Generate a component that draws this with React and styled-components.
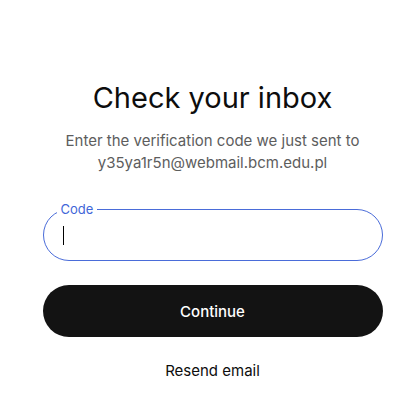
import React from 'react';
import styled, { createGlobalStyle } from 'styled-components';

const GlobalStyle = createGlobalStyle`
  html, body {
    margin: 0;
    padding: 0;
    background: #ffffff;
    font-family: Inter, "Liberation Sans", Arial, sans-serif;
    color: #0d0d0d;
  }
`;

const Page = styled.main`
  display: flex;
  justify-content: center;
  padding: 80px 0 0 6px;
`;

const Card = styled.section`
  width: 340px;
  display: flex;
  flex-direction: column;
  align-items: stretch;
`;

const Title = styled.h1`
  margin: 0;
  text-align: center;
  font-size: 29px;
  font-weight: 400;
  line-height: 36px;
  color: #0d0d0d;
`;

const Subtitle = styled.p`
  margin: 14px 0 0;
  text-align: center;
  font-size: 15px;
  line-height: 22px;
  color: #5d5d5d;
`;

const Field = styled.div`
  position: relative;
  margin-top: 35px;
  height: 52px;
  box-sizing: border-box;
  border: 1px solid #4a6cd9;
  border-radius: 26px;
  padding: 0 19px;
  display: flex;
  align-items: center;
`;

const Label = styled.label`
  position: absolute;
  top: -8px;
  left: 13px;
  padding: 0 4px;
  background: #ffffff;
  font-size: 13px;
  line-height: 14px;
  color: #4166d8;
`;

const Caret = styled.span`
  display: block;
  width: 1px;
  height: 19px;
  background: #000;
`;

const Button = styled.button`
  margin-top: 24px;
  height: 52px;
  border: none;
  border-radius: 26px;
  background: #131313;
  color: #ffffff;
  font-family: inherit;
  font-size: 15px;
  font-weight: 500;
  cursor: pointer;
`;

const LinkButton = styled.button`
  margin-top: 20px;
  align-self: center;
  border: none;
  background: none;
  font-family: inherit;
  font-size: 15px;
  color: #0d0d0d;
  padding: 4px 8px;
  cursor: pointer;
`;

export default function App() {
  return (
    <>
      <GlobalStyle />
      <Page>
        <Card>
          <Title>Check your inbox</Title>
          <Subtitle>
            Enter the verification code we just sent to
            <br />
            y35ya1r5n@webmail.bcm.edu.pl
          </Subtitle>
          <Field>
            <Label>Code</Label>
            <Caret />
          </Field>
          <Button>Continue</Button>
          <LinkButton>Resend email</LinkButton>
        </Card>
      </Page>
    </>
  );
}
